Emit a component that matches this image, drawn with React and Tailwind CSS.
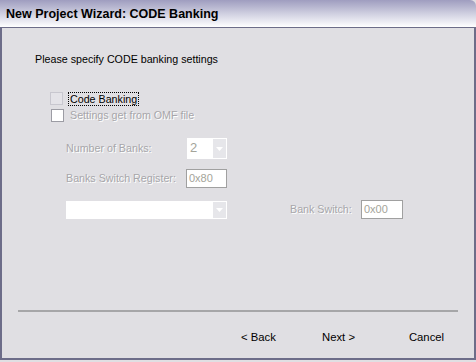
const font = { fontFamily: '"Liberation Sans", Arial, sans-serif' };

function Arrow() {
    return (
        <div className="w-[13px] h-full bg-[#e6e6ea] flex items-center justify-center">
            <svg width="7" height="4" viewBox="0 0 7 4">
                <path d="M0 0h7L3.5 4z" fill="#ffffff" />
            </svg>
        </div>
    );
}

function Combo({ value, width }) {
    return (
        <div className={`${width} h-full bg-white flex items-stretch justify-between pl-[3px] pr-px py-px`}>
            <span className="text-[#a4a49a] leading-[18px] text-[13px]">{value}</span>
            <Arrow />
        </div>
    );
}

function Field({ value, width }) {
    return (
        <div className={`${width} h-[19px] bg-white border border-[#a0a0a0] px-[2px] text-[#a4a49a] text-[11px] leading-[17px]`}>
            {value}
        </div>
    );
}

function Disabled({ children, className = '' }) {
    return (
        <span className={`text-[#a7a6aa] [text-shadow:1px_1px_0_#ffffff] ${className}`}>{children}</span>
    );
}

export default function App() {
    return (
        <div className="w-[476px] h-[362px] bg-[#e0dfe3] flex flex-col text-[10.7px] text-black overflow-hidden" style={font}>
            {/* title bar */}
            <div className="h-[28px] shrink-0 rounded-tr-[6px] border-b border-[#6d6d89] bg-gradient-to-b from-[#9f9dbf] via-[#cfcfe0] to-[#ffffff] flex items-center pl-[6px] pt-[2px]">
                <span className="font-bold text-[12.5px]">New Project Wizard: CODE Banking</span>
            </div>

            <div className="flex-1 flex flex-col border-l-2 border-r-2 border-b-2 border-[#6d6d89] mb-[2px]">
                <div className="pl-[33px] pt-[25px] leading-[13px]">Please specify CODE banking settings</div>

                {/* checkboxes */}
                <div className="pl-[48px] pt-[25px] flex flex-col gap-[3px]">
                    <div className="flex items-center h-[15px]">
                        <div className="w-[13px] h-[13px] bg-[#e4e3e8] border border-[#c8c7cf]" />
                        <span className="ml-[5px] px-px border border-dotted border-black leading-[12px]">Code Banking</span>
                    </div>
                    <div className="flex items-center h-[13px]">
                        <div className="ml-px w-[13px] h-[13px] bg-white border border-[#9c9ca4]" />
                        <Disabled className="ml-[6px]">Settings get from OMF file</Disabled>
                    </div>
                </div>

                {/* banking fields */}
                <div className="pl-[64px] pt-[16px] flex flex-col">
                    <div className="flex items-center h-[21px]">
                        <Disabled className="w-[121px]">Number of Banks:</Disabled>
                        <div className="h-[21px]"><Combo value="2" width="w-[40px]" /></div>
                    </div>
                    <div className="flex items-center h-[20px] mt-[9px]">
                        <Disabled className="w-[120px]">Banks Switch Register:</Disabled>
                        <Field value="0x80" width="w-[41px]" />
                    </div>
                    <div className="flex items-center h-[19px] mt-[12px]">
                        <div className="h-[18px]"><Combo value="" width="w-[161px]" /></div>
                        <Disabled className="ml-[63px] w-[71px]">Bank Switch:</Disabled>
                        <Field value="0x00" width="w-[42px]" />
                    </div>
                </div>

                <div className="flex-1" />

                {/* separator and buttons */}
                <div className="mx-[16px] h-[2px] bg-[#a6a6a8]" />
                <div className="flex justify-end pr-[10px] pt-[14px] pb-[9px]">
                    <button className="w-[75px] h-[23px] text-[11.3px]">&lt; Back</button>
                    <button className="ml-[5px] w-[75px] h-[23px] text-[11.3px]">Next &gt;</button>
                    <button className="ml-[13px] w-[75px] h-[23px] text-[11.3px]">Cancel</button>
                </div>
            </div>
        </div>
    );
}
